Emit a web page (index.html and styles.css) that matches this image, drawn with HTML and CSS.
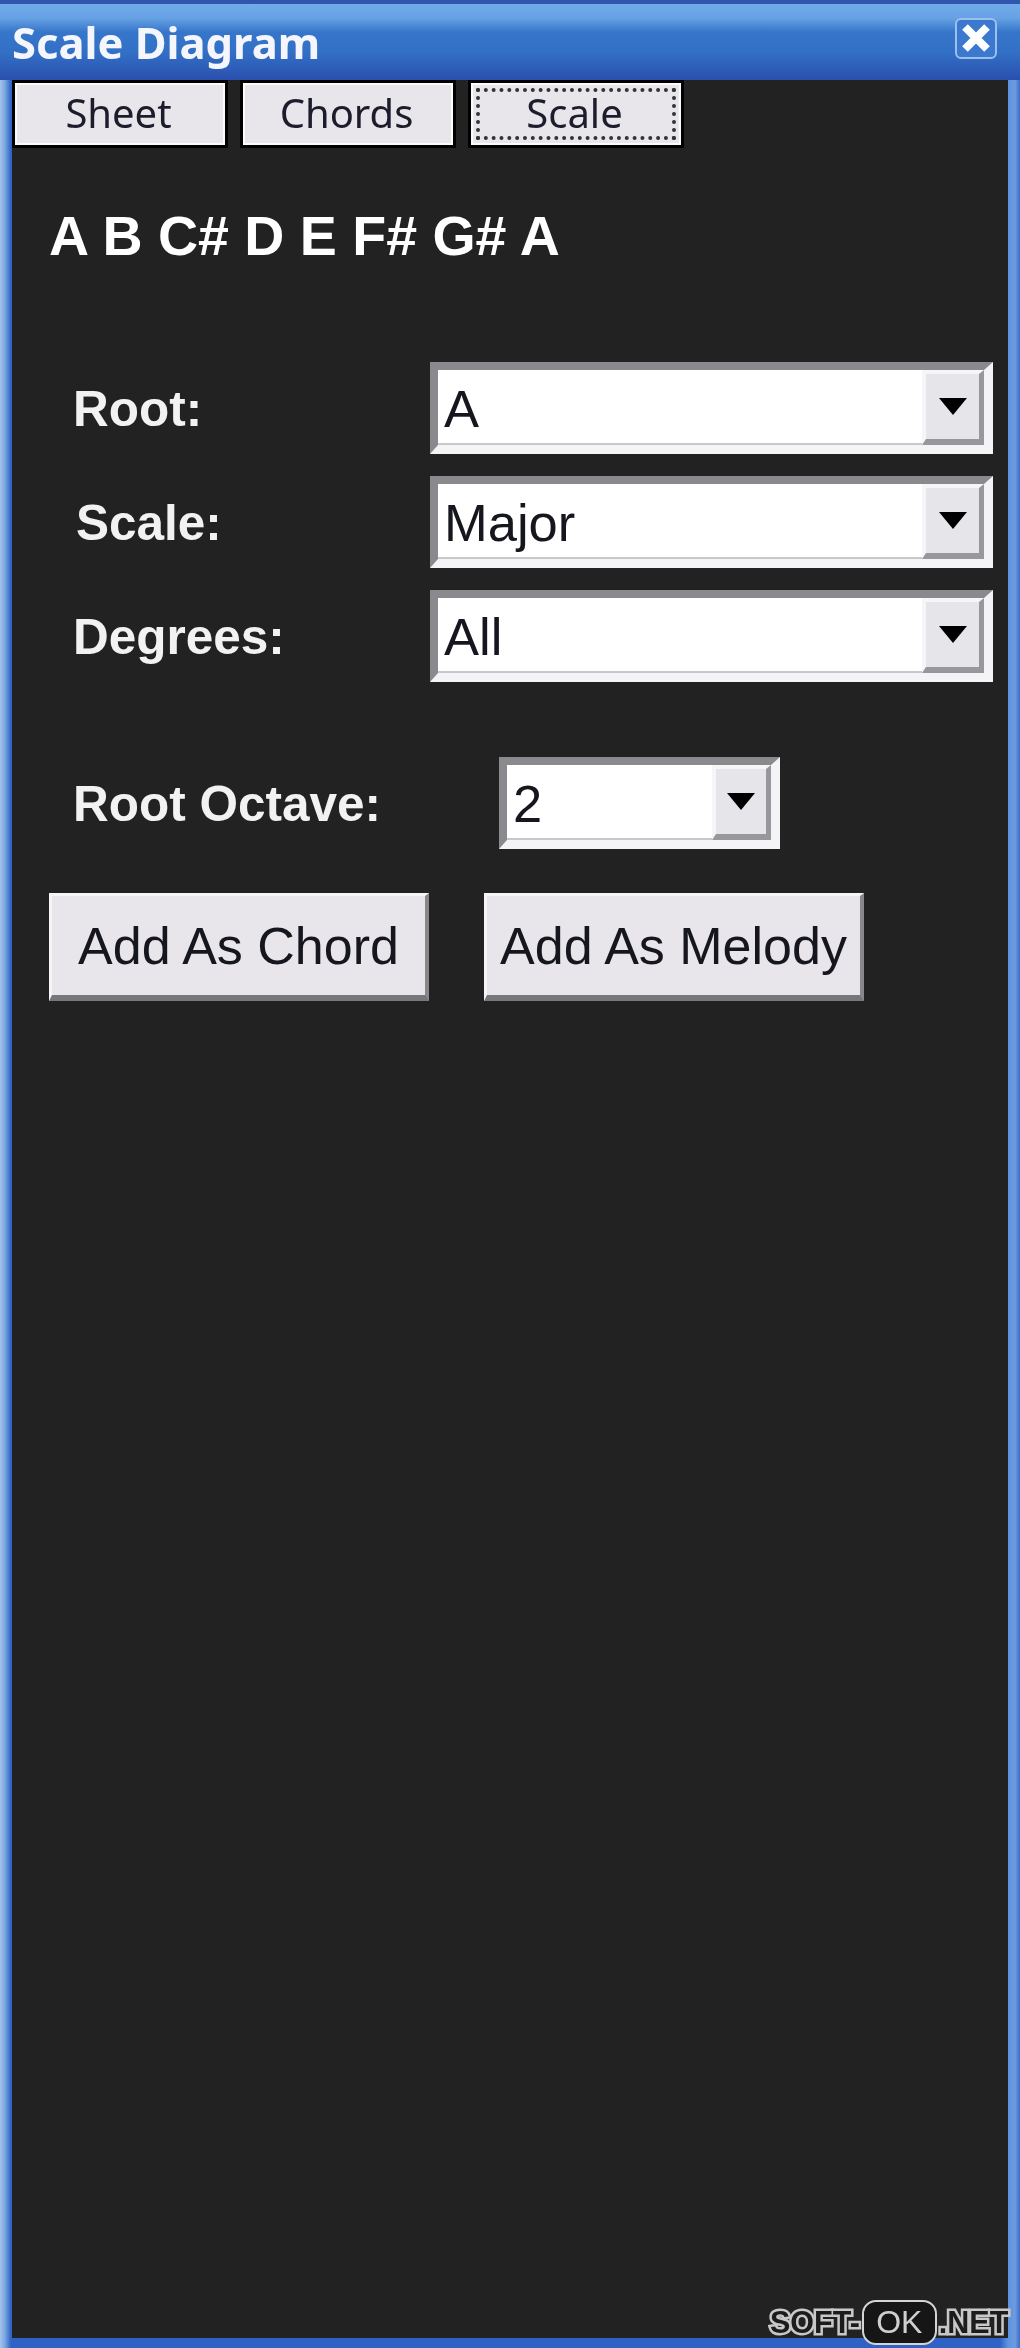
FILE: index.html
```html
<!DOCTYPE html>
<html>
<head>
  <meta charset="UTF-8">
  <title>Scale Diagram</title>
  <link rel="stylesheet" href="styles.css">
</head>
<body>
  <div class="window">
    <div class="titlebar">
      <span class="title">Scale Diagram</span>
      <div class="close">
        <svg width="38" height="37" viewBox="0 0 38 37"><path d="M8 7 L30 29 M30 7 L8 29" stroke="#fff" stroke-width="8" fill="none"/></svg>
      </div>
    </div>
    <div class="content">
      <div class="tabs">
        <div class="tab">Sheet</div>
        <div class="tab">Chords</div>
        <div class="tab active">Scale</div>
      </div>
      <div class="notes">A B C# D E F# G# A</div>
      <div class="form">
        <div class="row">
          <label class="label">Root:</label>
          <div class="select"><span class="value">A</span><span class="drop"><i class="arrow"></i></span></div>
        </div>
        <div class="row">
          <label class="label shifted">Scale:</label>
          <div class="select"><span class="value">Major</span><span class="drop"><i class="arrow"></i></span></div>
        </div>
        <div class="row">
          <label class="label">Degrees:</label>
          <div class="select"><span class="value">All</span><span class="drop"><i class="arrow"></i></span></div>
        </div>
      </div>
      <div class="row octave">
        <label class="label">Root Octave:</label>
        <div class="select small"><span class="value">2</span><span class="drop"><i class="arrow"></i></span></div>
      </div>
      <div class="buttons">
        <button class="btn">Add As Chord</button>
        <button class="btn">Add As Melody</button>
      </div>
    </div>
    <div class="watermark"><span class="mark">SOFT-</span><span class="ok">OK</span><span class="mark">.NET</span></div>
  </div>
</body>
</html>
```
FILE: styles.css
```css
html, body { margin: 0; padding: 0; background: #2c56b4; }
body { font-family: "Liberation Sans", Arial, sans-serif; }

/* the source is an upscaled capture, so everything is a bit soft */
.window { width: 1020px; height: 2348px; box-sizing: border-box; display: flex; flex-direction: column; position: relative; overflow: hidden; filter: blur(0.7px); border-top: 4px solid #2f55ac; background: linear-gradient(90deg, #a3c4ea 0, #7ba6e2 5px, #2f62c4 11px, #2f62c4 1000px, #5f93de 1008px, #6c9ce0 1015px, #3f6cc4 1020px); }

.titlebar { height: 76px; flex: none; display: flex; align-items: center; justify-content: space-between; box-sizing: border-box; padding: 0 23px 0 12px; background: linear-gradient(180deg, #70ace8 0, #66a2e4 14px, #3676ca 28px, #3270c6 48px, #2b52b0 74px, #2b4fae 76px); }
.title { font-family: "Noto Sans", "Open Sans", sans-serif; font-weight: bold; font-size: 43.5px; color: #f4f6fc; }
.close { width: 42px; height: 41px; box-sizing: border-box; border: 2px solid #9dbfec; border-radius: 6px; background: #3b78d0; margin-bottom: 7px; }
.close svg { display: block; }

.content { flex: 1; margin: 0 12px 10px 12px; background: #222222; display: flex; flex-direction: column; }

.tabs { display: flex; gap: 12px; }
.tab { width: 207px; height: 62px; line-height: 60px; padding-right: 3px; border: 3px solid #000; text-align: center; background: #e8e6ea; box-shadow: inset 0 0 0 2px #fbfbfb; font-family: "Noto Sans", "Open Sans", sans-serif; font-size: 40px; color: #1c1c2c; }
.active { outline: 4px dotted #333; outline-offset: -12px; }

.notes { margin: 57px 0 0 37px; font-size: 55.5px; line-height: 62px; font-weight: bold; color: #fff; }

.form { margin-top: 95px; display: flex; flex-direction: column; gap: 22px; }
.row { display: flex; align-items: center; padding-left: 61px; }
.label { width: 357px; font-size: 49.5px; font-weight: bold; color: #f2f2f2; }
.shifted { width: 354px; margin-left: 3px; }

.select { width: 563px; height: 92px; box-sizing: border-box; display: flex; justify-content: space-between; background: #fff; border-style: solid; border-width: 8px 9px 9px 8px; border-color: #8a8a8e #f4f4f6 #f4f4f6 #8a8a8e; box-shadow: inset -1px -2px 0 #c8c8cc; }
.value { font-size: 52.5px; line-height: 77px; color: #16161e; padding-left: 6px; }
.drop { width: 62px; flex: none; display: flex; align-items: center; justify-content: center; box-sizing: border-box; background: #e6e5e9; border-style: solid; border-width: 4px 5px 6px 4px; border-color: #f6f6f8 #98989c #98989c #f6f6f8; }
.arrow { width: 0; height: 0; border-style: solid; border-width: 17px 14px 0 14px; border-color: #000 transparent transparent transparent; }

.octave { margin-top: 75px; }
.octave .label { width: 426px; }
.small { width: 281px; }
.small .drop { width: 59px; }

.buttons { display: flex; gap: 55px; margin: 44px 0 0 37px; }
.btn { width: 380px; height: 108px; padding: 0; font-family: inherit; font-size: 52px; color: #16161e; background: #e8e6ea; border-style: solid; border-width: 3px 4px 6px 3px; border-color: #f6f6f8 #88888c #77777b #f6f6f8; }

.watermark { position: absolute; left: 770px; bottom: 3px; display: flex; align-items: center; font-size: 30.5px; }
.mark { font-weight: bold; color: #1c1c1c; -webkit-text-stroke: 5px #c8c8c8; paint-order: stroke fill; }
.ok { width: 75px; height: 45px; box-sizing: border-box; margin: 0 2px; border: 2px solid #d4d4d4; border-radius: 14px; background: #161616; color: #cfcfcf; text-align: center; line-height: 41px; font-size: 32px; }
```
